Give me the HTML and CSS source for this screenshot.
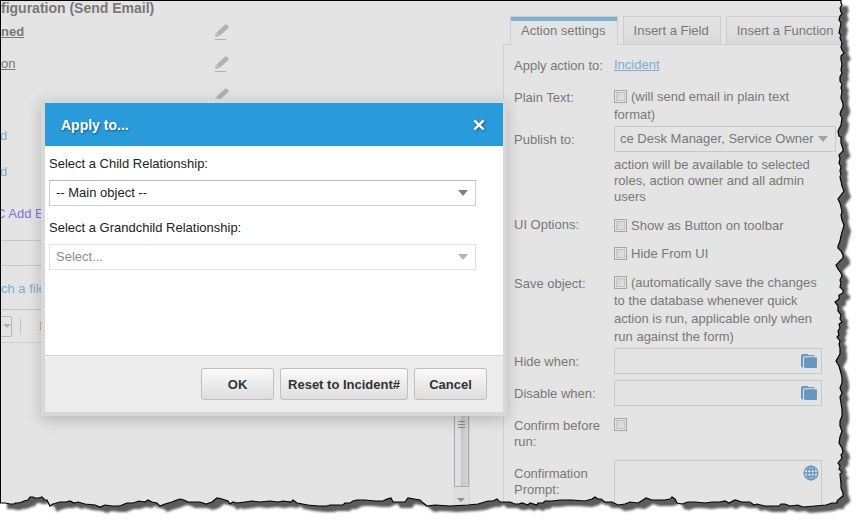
FILE: index.html
```html
<!DOCTYPE html>
<html lang="en">
<head>
<meta charset="utf-8">
<title>Configuration (Send Email)</title>
<link rel="stylesheet" href="styles.css">
</head>
<body>
<svg class="defs" width="0" height="0" aria-hidden="true">
  <symbol id="pencil" viewBox="0 0 14 16">
    <path d="M0 12.6 1 9.2 3.8 12 .8 13z"/>
    <path d="M1.6 8.6 9.8.7Q11 0 12 .8L13.3 2.1Q14.2 3 13.4 4L5 11.8Q4.4 12 4 11.4L1.8 9.3Q1.4 9 1.6 8.600z"/>
    <path d="M0 15h11v1H0z"/>
  </symbol>
  <symbol id="folder" viewBox="0 0 16 14">
    <path d="M0 2Q0 0 1.500 0H6Q7 0 7.300 1H12.500Q13.700 1 13.700 2.300H4Q2 2.300 2 4.300V13.500Q0 13.500 0 12z"/>
    <path d="M3 4.600Q3 3.300 4.300 3.300H14.700Q16 3.300 16 4.600V12.500Q16 14 14.700 14H4.300Q3 14 3 12.500z"/>
  </symbol>
  <symbol id="globe" viewBox="0 0 16 16">
    <g fill="none" stroke="currentColor" stroke-width="1.3"><circle cx="8" cy="8" r="6.900"/><ellipse cx="8" cy="8" rx="3.500" ry="6.900"/><path d="M8 1v14M1 8h14M2.300 4.500h11.400M2.300 11.500h11.400"/></g>
  </symbol>
</svg>

<div class="page">
  <main class="editor">
    <h1 class="title">figuration (Send Email)</h1>
    <div class="row"><a class="head strong" href="#">ned</a><svg class="pencil"><use href="#pencil"/></svg></div>
    <div class="row"><a class="head" href="#">on</a><svg class="pencil"><use href="#pencil"/></svg></div>
    <div class="row"><span class="head"></span><svg class="pencil"><use href="#pencil"/></svg></div>
    <div class="links">
      <a class="add" href="#">d</a>
      <a class="add" href="#">d</a>
      <a class="add cc" href="#">C Add E</a>
    </div>
    <div class="subject"></div>
    <div class="attach"><a class="add" href="#">ch a file</a></div>
    <div class="toolbar">
      <button class="drop" type="button" aria-label="Size"><span class="caret small"></span></button>
      <span class="divider"></span>
      <button class="italic" type="button">I</button>
    </div>
    <div class="canvas">
      <div class="track">
        <div class="thumb"><span class="grip"></span></div>
        <span class="down"></span>
      </div>
    </div>
  </main>

  <aside class="side">
    <nav class="tabs">
      <a class="tab active" href="#">Action settings</a>
      <a class="tab" href="#">Insert a Field</a>
      <a class="tab" href="#">Insert a Function</a>
    </nav>
    <form class="form">
      <span class="label">Apply action to:</span>
      <div class="value"><a class="incident" href="#">Incident</a></div>

      <span class="label">Plain Text:</span>
      <label class="value"><input class="check" type="checkbox">(will send email in plain text format)</label>

      <label class="label" for="publish">Publish to:</label>
      <div>
        <div class="combo wide">
          <select id="publish"><option>ce Desk Manager, Service Owner</option></select>
          <span class="caret"></span>
        </div>
        <p class="help">action will be available to selected roles, action owner and all admin users</p>
      </div>

      <span class="label">UI Options:</span>
      <div class="options">
        <label><input class="check" type="checkbox">Show as Button on toolbar</label>
        <label><input class="check" type="checkbox">Hide From UI</label>
      </div>

      <span class="label">Save object:</span>
      <label class="value"><input class="check" type="checkbox">(automatically save the changes to the database whenever quick action is run, applicable only when run against the form)</label>

      <label class="label" for="hide">Hide when:</label>
      <div class="field"><input id="hide" type="text"><svg class="folder"><use href="#folder"/></svg></div>

      <label class="label" for="disable">Disable when:</label>
      <div class="field"><input id="disable" type="text"><svg class="folder"><use href="#folder"/></svg></div>

      <label class="label" for="confirm">Confirm before run:</label>
      <div class="value"><input class="check" id="confirm" type="checkbox"></div>

      <label class="label" for="prompt">Confirmation Prompt:</label>
      <div class="field tall"><textarea id="prompt"></textarea><svg class="globe"><use href="#globe"/></svg></div>
    </form>
  </aside>
</div>

<section class="dialog" role="dialog" aria-labelledby="dialog-title">
  <header class="dialog-head">
    <h2 id="dialog-title">Apply to...</h2>
    <button class="close" type="button" aria-label="Close"><svg viewBox="0 0 12 12"><path d="M2 2l8 8M10 2l-8 8"/></svg></button>
  </header>
  <div class="dialog-body">
    <label for="child">Select a Child Relationship:</label>
    <div class="combo">
      <select id="child"><option>-- Main object --</option></select>
      <span class="caret"></span>
    </div>
    <label for="grandchild">Select a Grandchild Relationship:</label>
    <div class="combo disabled">
      <select id="grandchild" disabled><option>Select...</option></select>
      <span class="caret"></span>
    </div>
  </div>
  <footer class="dialog-foot">
    <button class="btn" type="button">OK</button>
    <button class="btn reset" type="button">Reset to Incident#</button>
    <button class="btn" type="button">Cancel</button>
  </footer>
</section>

<svg class="torn" viewBox="0 0 860 522" preserveAspectRatio="none" aria-hidden="true">
  <defs>
    <path id="edge" d="M0 0H841L841 3 842 5 840 8 841 12 842 14 840 16 839 20 841 23 840 28 839 33 841 35 840 38 842 43 841 47 842 50 844 53 841 56 841 60 842 64 841 70 842 73 840 77 840 81 842 84 841 88 842 91 841 98 843 104 843 107 841 111 840 114 842 118 841 125 838 131 839 136 841 137 841 143 843 149 843 151 839 155 840 159 839 163 841 167 840 171 841 174 840 177 841 181 842 186 844 191 841 195 838 199 840 203 841 207 842 212 841 215 842 220 844 225 843 229 842 232 841 236 840 241 838 246 838 248 841 251 843 255 843 258 840 261 836 265 838 269 841 273 842 276 840 280 841 283 840 287 843 290 843 293 839 295 839 299 835 302 838 306 838 311 841 315 840 319 842 322 839 324 840 328 838 331 839 335 837 337 840 341 839 344 840 348 840 354 836 361 839 366 841 373 842 378 842 383 840 388 842 393 840 397 841 403 842 410 842 416 840 421 840 426 842 431 840 437 839 443 842 448 843 452 841 455 842 458 838 463 840 466 839 469 842 472 840 474 841 484 841 488 843 493 843 496 839 499 837 501 837 503 832 503 826 505 815 506 803 507 798 505 790 506 785 504 781 504 779 506 765 506 757 504 754 505 750 502 742 502 735 500 729 503 725 501 720 502 712 502 705 503 695 502 688 502 682 504 677 503 675 499 672 497 670 499 665 500 658 500 652 500 646 498 643 500 638 503 630 502 625 504 618 505 612 502 605 502 601 499 598 499 595 497 592 499 585 501 572 500 560 500 552 501 545 501 543 503 538 503 537 505 530 503 528 505 522 503 519 504 515 504 510 502 500 502 497 499 493 501 488 501 478 504 468 505 450 506 435 505 427 506 422 502 420 500 414 499 408 498 405 502 393 502 391 498 387 499 383 501 375 501 365 500 357 500 353 501 350 503 345 503 343 505 330 505 327 506 318 506 308 505 297 503 293 500 291 502 283 501 278 502 270 501 260 502 252 501 245 502 237 503 233 502 230 504 228 501 222 499 217 498 212 502 206 504 200 502 188 502 184 500 180 499 177 500 172 502 165 504 160 506 157 503 152 502 148 500 145 502 139 501 133 503 127 503 122 505 119 506 112 506 105 505 100 507 95 505 85 504 78 502 74 503 70 501 66 502 60 502 53 504 50 506 47 500 45 500 42 497 39 498 35 498 33 497 30 497 28 500 24 501 22 502 18 503 15 503 14 504 10 504 5 503 0 503z"/>
    <clipPath id="outside"><path clip-rule="evenodd" d="M0 0H841L841 3 842 5 840 8 841 12 842 14 840 16 839 20 841 23 840 28 839 33 841 35 840 38 842 43 841 47 842 50 844 53 841 56 841 60 842 64 841 70 842 73 840 77 840 81 842 84 841 88 842 91 841 98 843 104 843 107 841 111 840 114 842 118 841 125 838 131 839 136 841 137 841 143 843 149 843 151 839 155 840 159 839 163 841 167 840 171 841 174 840 177 841 181 842 186 844 191 841 195 838 199 840 203 841 207 842 212 841 215 842 220 844 225 843 229 842 232 841 236 840 241 838 246 838 248 841 251 843 255 843 258 840 261 836 265 838 269 841 273 842 276 840 280 841 283 840 287 843 290 843 293 839 295 839 299 835 302 838 306 838 311 841 315 840 319 842 322 839 324 840 328 838 331 839 335 837 337 840 341 839 344 840 348 840 354 836 361 839 366 841 373 842 378 842 383 840 388 842 393 840 397 841 403 842 410 842 416 840 421 840 426 842 431 840 437 839 443 842 448 843 452 841 455 842 458 838 463 840 466 839 469 842 472 840 474 841 484 841 488 843 493 843 496 839 499 837 501 837 503 832 503 826 505 815 506 803 507 798 505 790 506 785 504 781 504 779 506 765 506 757 504 754 505 750 502 742 502 735 500 729 503 725 501 720 502 712 502 705 503 695 502 688 502 682 504 677 503 675 499 672 497 670 499 665 500 658 500 652 500 646 498 643 500 638 503 630 502 625 504 618 505 612 502 605 502 601 499 598 499 595 497 592 499 585 501 572 500 560 500 552 501 545 501 543 503 538 503 537 505 530 503 528 505 522 503 519 504 515 504 510 502 500 502 497 499 493 501 488 501 478 504 468 505 450 506 435 505 427 506 422 502 420 500 414 499 408 498 405 502 393 502 391 498 387 499 383 501 375 501 365 500 357 500 353 501 350 503 345 503 343 505 330 505 327 506 318 506 308 505 297 503 293 500 291 502 283 501 278 502 270 501 260 502 252 501 245 502 237 503 233 502 230 504 228 501 222 499 217 498 212 502 206 504 200 502 188 502 184 500 180 499 177 500 172 502 165 504 160 506 157 503 152 502 148 500 145 502 139 501 133 503 127 503 122 505 119 506 112 506 105 505 100 507 95 505 85 504 78 502 74 503 70 501 66 502 60 502 53 504 50 506 47 500 45 500 42 497 39 498 35 498 33 497 30 497 28 500 24 501 22 502 18 503 15 503 14 504 10 504 5 503 0 503zM-5 -5H870V530H-5z"/></clipPath>
    <filter id="soft" x="-5%" y="-5%" width="110%" height="110%"><feGaussianBlur stdDeviation="1.300"/></filter>
  </defs>
  <g clip-path="url(#outside)">
    <path d="M-5 -5H870V530H-5z" fill="#fff"/>
    <g filter="url(#soft)"><use href="#edge" x="7" y="6" fill="#5c5c5c"/></g>
  </g>
  <use href="#edge" fill="none" stroke="#000" stroke-width="1.200"/>
  <path d="M0 .5H841M.5 0V503" stroke="#000"/>
</svg>
</body>
</html>
```
FILE: styles.css
```css
* { box-sizing: border-box; }

html, body { height: 100%; }

body {
  margin: 0;
  overflow: hidden;
  background: #fff;
  color: #787878;
  font: 13px/16px "Liberation Sans", Arial, sans-serif;
}

h1, h2, p { margin: 0; }

button, select, input, textarea { font: inherit; color: inherit; margin: 0; }

.defs { position: absolute; }

.page {
  display: grid;
  grid-template-columns: minmax(0, 1fr) 357px;
  height: 100%;
  overflow: hidden;
  background: #e4e4e4;
}

/* Editor column */
.editor {
  display: flex;
  flex-direction: column;
  min-height: 0;
}

.title {
  height: 16px;
  padding-left: 1px;
  font-size: 14px;
  white-space: nowrap;
}

.row {
  display: flex;
  align-items: center;
  height: 32px;
}

.head {
  width: 215px;
  padding-left: 1px;
  color: #787878;
}

.strong { font-weight: bold; }

.pencil {
  width: 14px;
  height: 16px;
  fill: #b2b2b2;
}

.links {
  display: flex;
  flex-direction: column;
  gap: 20px;
  height: 128px;
  padding-top: 16px;
}

.add { color: #7aaed0; text-decoration: none; }

.cc { margin-top: 6px; margin-left: -4px; color: #7b72ea; }

.subject {
  height: 26px;
  border: solid #c9c9c9;
  border-width: 1px 0;
}

.attach {
  height: 44px;
  padding: 15px 1px;
  border-bottom: 1px solid #c4c4c4;
}

.toolbar {
  display: flex;
  align-items: center;
  gap: 8px;
  height: 33px;
  border-bottom: 1px solid #cfcfcf;
}

.drop {
  width: 12px;
  height: 21px;
  padding: 0;
  border: 1px solid #b5b5b5;
  border-left: 0;
  border-radius: 0 2px 2px 0;
  background: transparent;
}

.divider { width: 1px; height: 16px; background: #c4c4c4; }

.italic {
  padding: 0 0 0 10px;
  border: 0;
  background: transparent;
  font-family: "Liberation Serif", serif;
}

.canvas {
  display: flex;
  flex: 1;
  justify-content: flex-end;
  padding-right: 33px;
}

.track {
  display: flex;
  flex-direction: column;
  align-items: center;
  gap: 11px;
  width: 17px;
  background: #dedede;
  border-right: 1px solid #d2d2d2;
}

.thumb {
  width: 15px;
  height: 144px;
  padding: 77px 3px 0;
  border: 1px solid #ababab;
  background: linear-gradient(90deg, #e0e0e0 40%, #c8c8cc 50%, #d6d6d6);
}

.grip {
  display: block;
  height: 9px;
  background: repeating-linear-gradient(#8c8c8c 0 1px, transparent 1px 3px);
}

.down {
  border: 4px solid transparent;
  border-top-color: #8e8e8e;
  border-bottom: 0;
}

/* Settings column */
.side {
  display: flex;
  flex-direction: column;
  min-width: 0;
  padding-top: 16px;
}

.tabs {
  display: flex;
  gap: 5px;
  padding-left: 7px;
  border-bottom: 1px solid #cecece;
}

.tab {
  padding: 6px 11px 5px 10px;
  border: 1px solid #cecece;
  border-bottom: 0;
  background: linear-gradient(#e4e4e4, #d9d9d9);
  color: #787878;
  text-decoration: none;
  white-space: nowrap;
}

.active {
  margin-bottom: -1px;
  background: linear-gradient(#7ab3d2 4px, #e4e4e4 4px);
}

.form {
  display: grid;
  grid-template-columns: 100px minmax(0, 1fr);
  align-content: start;
  row-gap: 3px;
  flex: 1;
  padding: 7px 38px 0 10px;
  border-left: 1px solid #cecece;
}

.label { padding: 6px 0 7px; }

.value { padding-top: 4px; margin-bottom: -1px; line-height: 18px; }

.incident { color: #7aaed0; }

.check {
  appearance: none;
  width: 13px;
  height: 13px;
  margin-right: 4px;
  border: 1px solid #a5a5a5;
  background: linear-gradient(135deg, #cfcfcf, #e4e4e4);
  box-shadow: inset 0 0 0 1px #e4e4e4, inset 0 0 0 2px #c2c2c2;
  vertical-align: -2px;
}

.help { padding: 5px 0 3px; }

.options {
  display: flex;
  flex-direction: column;
  gap: 10px;
  padding: 6px 0 4px;
  line-height: 18px;
}

.combo {
  display: grid;
  align-items: center;
  height: 26px;
}

.combo > * { grid-area: 1 / 1; }

.combo select {
  appearance: none;
  width: 100%;
  height: 26px;
  padding: 0 6px;
  border: 1px solid #d0d0d0;
  border-top-color: #b8b8b8;
  border-radius: 0;
  background: transparent;
  opacity: 1;
}

.wide { width: 222px; }

.wide select { padding: 0 5px; border-color: #c9c9c9; }

.caret {
  justify-self: end;
  margin-right: 8px;
  border: 5px solid transparent;
  border-top: 6px solid #808080;
  border-bottom: 0;
  pointer-events: none;
}

.wide .caret { border-top-color: #a3a3a3; }

.small {
  display: block;
  margin: 0;
  border-width: 4px;
  border-top: 4px solid #adadad;
  border-bottom: 0;
}

.field {
  display: flex;
  justify-content: space-between;
  height: 26px;
  padding: 5px 4px 0;
  border: 1px solid #c9c9c9;
}

.field input, .field textarea {
  flex: 1;
  min-width: 0;
  height: 16px;
  padding: 0;
  border: 0;
  background: transparent;
  resize: none;
}

.tall { height: 64px; padding: 4px 2px 0; }

.folder { width: 16px; height: 14px; fill: #6797c0; }

.globe { width: 16px; height: 16px; color: #6797c0; }

/* Dialog */
.dialog {
  position: absolute;
  top: 99px;
  left: 41px;
  width: 466px;
  max-width: 90%;
  border: 4px solid #d8d8d8;
  background: #fff;
  box-shadow: 0 4px 14px rgba(0, 0, 0, .2);
  color: #222;
}

.dialog-head {
  display: flex;
  align-items: center;
  justify-content: space-between;
  height: 43px;
  padding: 0 17px 0 16px;
  background: #299ada;
  color: #fff;
}

.dialog-head h2 {
  font-size: 14px;
  text-shadow: 1px 1px 2px #1a5e86;
}

.close {
  width: 14px;
  height: 20px;
  padding: 0;
  border: 0;
  background: transparent;
}

.close svg {
  display: block;
  width: 14px;
  height: 14px;
  fill: none;
  stroke: #fff;
  stroke-width: 2;
  filter: drop-shadow(1px 1px 1px #1a5e86);
}

.dialog-body {
  display: flex;
  flex-direction: column;
  height: 209px;
  padding: 10px 27px 0 4px;
}

.dialog-body .combo { margin: 8px 0 14px; }

.disabled { color: #8e8e8e; }

.disabled select { border-color: #e2e2e2; }

.disabled .caret { border-top-color: #b2b2b2; }

.dialog-foot {
  display: flex;
  justify-content: flex-end;
  gap: 6px;
  padding: 12px 16px;
  border-top: 1px solid #d5d5d5;
  background: #ececec;
}

.btn {
  min-width: 73px;
  height: 32px;
  padding: 2px 7px 0;
  border: 1px solid #bfbfbf;
  border-radius: 3px;
  background: linear-gradient(#fafafa, #dedede);
  color: #333;
  font-weight: bold;
  white-space: nowrap;
}

/* Ragged sheet border */
.torn {
  position: absolute;
  inset: 0;
  width: 100%;
  height: 100%;
  pointer-events: none;
}
```
